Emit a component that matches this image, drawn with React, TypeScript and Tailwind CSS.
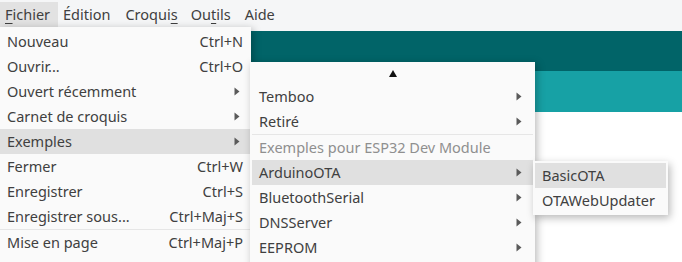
import React from "react";

const font = { fontFamily: '"Noto Sans", "Open Sans", sans-serif' };

function Arrow() {
  return (
    <svg width="6" height="9" viewBox="0 0 6 9" className="shrink-0">
      <path d="M0.5 0.5 L5.5 4.5 L0.5 8.5 Z" fill="#5a5a5a" />
    </svg>
  );
}

function Row({
  label,
  shortcut,
  arrow,
  active,
  disabled,
}: {
  label: React.ReactNode;
  shortcut?: string;
  arrow?: boolean;
  active?: boolean;
  disabled?: boolean;
}) {
  return (
    <div
      className={`flex h-[25px] items-center justify-between pl-[7px] pr-[8px] ${
        active ? "bg-[#e0e0e0]" : ""
      } ${disabled ? "text-[#8f8f8f]" : "text-[#404040]"}`}
    >
      <span className="whitespace-nowrap">{label}</span>
      {shortcut && <span className="whitespace-nowrap">{shortcut}</span>}
      {arrow && (
        <span className="pr-[3px]">
          <Arrow />
        </span>
      )}
    </div>
  );
}

export default function App() {
  return (
    <div
      className="relative h-[262px] w-[682px] overflow-hidden bg-white text-[14.5px] leading-none"
      style={font}
    >
      {/* menubar */}
      <div className="flex h-[31px] items-start bg-[#f5f6f7] text-[#404040]">
        <div className="mt-[2px] flex h-[25px] w-[58px] items-center bg-[#e2e2e2] pl-[5px]">
          <span>
            <span className="underline underline-offset-[3px]">F</span>ichier
          </span>
        </div>
        <div className="mt-[2px] flex h-[25px] items-center pl-[5px] pr-[15px]">Édition</div>
        <div className="mt-[2px] flex h-[25px] items-center pr-[13px]">
          <span>
            Croqui<span className="underline underline-offset-[3px]">s</span>
          </span>
        </div>
        <div className="mt-[2px] flex h-[25px] items-center pr-[14px]">
          <span>
            Ou<span className="underline underline-offset-[3px]">t</span>ils
          </span>
        </div>
        <div className="mt-[2px] flex h-[25px] items-center">Aide</div>
      </div>
      {/* background bars */}
      <div className="h-[40px] bg-[#016468]" />
      <div className="h-[41px] bg-[#17a1a5]" />

      {/* main menu */}
      <div className="absolute left-0 top-[27px] w-[251px] bg-[#fafafa] pt-[2px] shadow-[2px_2px_8px_rgba(0,0,0,0.28)]">
        <Row label="Nouveau" shortcut="Ctrl+N" />
        <Row label="Ouvrir..." shortcut="Ctrl+O" />
        <Row label="Ouvert récemment" arrow />
        <Row label="Carnet de croquis" arrow />
        <Row label="Exemples" arrow active />
        <Row label="Fermer" shortcut="Ctrl+W" />
        <Row label="Enregistrer" shortcut="Ctrl+S" />
        <Row label="Enregistrer sous..." shortcut="Ctrl+Maj+S" />
        <div className="h-[1px] bg-[#e6e6e6]" />
        <Row label="Mise en page" shortcut="Ctrl+Maj+P" />
        <div className="h-[20px]" />
      </div>

      {/* submenu */}
      <div className="absolute left-[250px] top-[62px] w-[285px] bg-[#fafafa] px-[2px] shadow-[2px_2px_8px_rgba(0,0,0,0.28)]">
        <div className="flex h-[22px] items-center justify-center">
          <svg width="8" height="7" viewBox="0 0 8 7">
            <path d="M4 0 L8 7 L0 7 Z" fill="#111" />
          </svg>
        </div>
        <Row label="Temboo" arrow />
        <Row label="Retiré" arrow />
        <div className="h-[1px] bg-[#e6e6e6]" />
        <Row label="Exemples pour ESP32 Dev Module" disabled />
        <Row label="ArduinoOTA" arrow active />
        <Row label="BluetoothSerial" arrow />
        <Row label="DNSServer" arrow />
        <Row label="EEPROM" arrow />
        <div className="h-[20px]" />
      </div>

      {/* sub-submenu */}
      <div className="absolute left-[533px] top-[161px] w-[135px] bg-[#fafafa] p-[2px] shadow-[2px_3px_8px_rgba(0,0,0,0.28)]">
        <Row label="BasicOTA" active />
        <Row label="OTAWebUpdater" />
      </div>
    </div>
  );
}
